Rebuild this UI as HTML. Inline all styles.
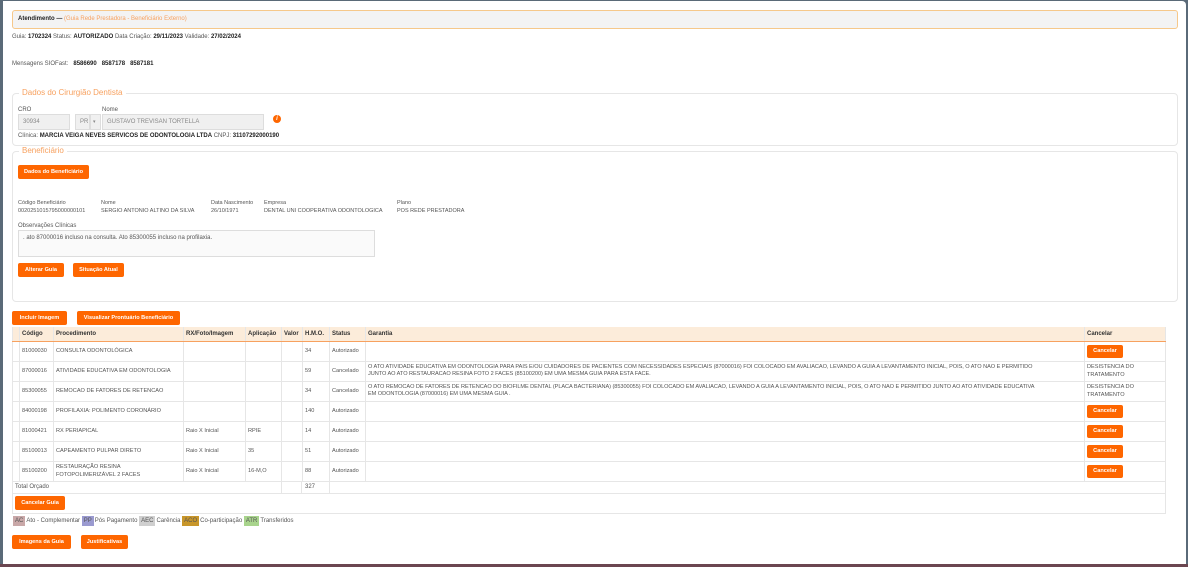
<!DOCTYPE html>
<html><head><meta charset="utf-8"><style>
*{box-sizing:border-box;margin:0;padding:0}
body{width:1188px;height:567px;background:#5a6a78;font-family:"Liberation Sans",sans-serif;font-size:6px;color:#555;position:relative;overflow:hidden}
.pg{position:absolute;left:3px;top:1px;width:1183px;height:563px;background:#fff;border-radius:0 4px 0 0}
.bot{position:absolute;left:0;top:564px;width:1188px;height:3px;background:#6b4650}
.a{position:absolute;white-space:nowrap}
.b{color:#222;font-weight:bold}
.btn{position:absolute;background:#fe6600;color:#fff;font-weight:bold;border-radius:2px;text-align:center;font-size:5.6px;line-height:14px;height:14px}
.fs{position:absolute;border:1px solid #e6e6e6;border-radius:4px}
.lg{position:absolute;background:#fff;color:#f7a15f;font-size:8px;padding:0 3px;line-height:10px}
.inp{position:absolute;background:#f0f0f0;border:1px solid #ddd;height:16px;line-height:14px;padding-left:4px;color:#888}
table{position:absolute;left:12px;top:327px;border-collapse:collapse;width:1154px;table-layout:fixed}
td,th{border:1px solid #e6e6e6;padding:0 2px;height:20px;vertical-align:middle;text-align:left;font-size:5.6px;overflow:hidden}
th{height:14px;background:#fcecda;color:#333;border-bottom:1.5px solid #f7a15f;border-top:none;font-size:6px}
td .btn{position:static;display:inline-block;width:36px;height:13px;line-height:13px}
.tag{display:inline-block;padding:0 2px;line-height:10px;height:10px;margin-right:1px}
</style></head><body>
<div class="pg"></div><div class="bot"></div>
<div class="a" style="left:12px;top:10px;width:1166px;height:19px;background:#f3f3f3;border:1px solid #f6c88a;border-radius:3px;padding:0 5px;line-height:17px"><span class="b">Atendimento —</span> <span style="color:#f7a15f">(Guia Rede Prestadora - Beneficiário Externo)</span></div>
<div class="a" style="left:12px;top:34px">Guia: <span class="b">1702324</span> Status: <span class="b">AUTORIZADO</span> Data Criação: <span class="b">29/11/2023</span> Validade: <span class="b">27/02/2024</span></div>
<div class="a" style="left:12px;top:61px">Mensagens SIOFast: &nbsp; <span class="b">8586690 &nbsp; 8587178 &nbsp; 8587181</span></div>

<div class="fs" style="left:12px;top:93px;width:1166px;height:53px"></div>
<div class="lg" style="left:19px;top:88px">Dados do Cirurgião Dentista</div>
<div class="a" style="left:18px;top:107px">CRO</div>
<div class="a" style="left:102px;top:107px">Nome</div>
<div class="inp" style="left:18px;top:114px;width:52px">30934</div>
<div class="inp" style="left:75px;top:114px;width:15px">PR</div>
<div class="inp" style="left:90px;top:114px;width:11px;font-size:5px;padding-left:2px">▾</div>
<div class="inp" style="left:102px;top:114px;width:162px">GUSTAVO TREVISAN TORTELLA</div>
<div class="a" style="left:273px;top:115px;width:8px;height:8px;border-radius:50%;background:#fe6600;color:#fff;font-size:6px;line-height:8px;text-align:center;font-weight:bold;font-style:italic">i</div>
<div class="a" style="left:18px;top:133px">Clínica: <span class="b">MARCIA VEIGA NEVES SERVICOS DE ODONTOLOGIA LTDA</span> CNPJ: <span class="b">31107292000190</span></div>

<div class="fs" style="left:12px;top:151px;width:1166px;height:151px"></div>
<div class="lg" style="left:19px;top:146px">Beneficiário</div>
<div class="btn" style="left:18px;top:165px;width:71px">Dados do Beneficiário</div>
<div class="a" style="left:18px;top:199px;line-height:8px;font-size:5.5px">Código Beneficiário<br>0020251015795000000101</div>
<div class="a" style="left:101px;top:199px;line-height:8px;font-size:5.5px">Nome<br>SERGIO ANTONIO ALTINO DA SILVA</div>
<div class="a" style="left:211px;top:199px;line-height:8px;font-size:5.5px">Data Nascimento<br>26/10/1971</div>
<div class="a" style="left:264px;top:199px;line-height:8px;font-size:5.5px">Empresa<br>DENTAL UNI COOPERATIVA ODONTOLOGICA</div>
<div class="a" style="left:397px;top:199px;line-height:8px;font-size:5.5px">Plano<br>POS REDE PRESTADORA</div>
<div class="a" style="left:18px;top:223px">Observações Clínicas</div>
<div class="a" style="left:18px;top:230px;width:357px;height:27px;border:1px solid #ddd;background:#fafafa;padding:4px">. ato 87000016 incluso na consulta. Ato 85300055 incluso na profilaxia.</div>
<div class="btn" style="left:18px;top:263px;width:46px">Alterar Guia</div>
<div class="btn" style="left:73px;top:263px;width:51px">Situação Atual</div>

<div class="btn" style="left:12px;top:311px;width:55px">Incluir Imagem</div>
<div class="btn" style="left:77px;top:311px;width:103px">Visualizar Prontuário Beneficiário</div>

<table>
<colgroup><col style="width:7px"><col style="width:34px"><col style="width:130px"><col style="width:62px"><col style="width:36px"><col style="width:21px"><col style="width:27px"><col style="width:36px"><col><col style="width:81px"></colgroup>
<tr><th></th><th>Código</th><th>Procedimento</th><th>RX/Foto/Imagem</th><th>Aplicação</th><th>Valor</th><th>H.M.O.</th><th>Status</th><th>Garantia</th><th>Cancelar</th></tr>
<tr><td></td><td>81000030</td><td>CONSULTA ODONTOLÓGICA</td><td></td><td></td><td></td><td>34</td><td>Autorizado</td><td></td><td><span class="btn">Cancelar</span></td></tr>
<tr><td></td><td>87000016</td><td>ATIVIDADE EDUCATIVA EM ODONTOLOGIA</td><td></td><td></td><td></td><td>59</td><td>Cancelado</td><td style="font-size:5.6px;line-height:7px;letter-spacing:-0.05px">O ATO ATIVIDADE EDUCATIVA EM ODONTOLOGIA PARA PAIS E/OU CUIDADORES DE PACIENTES COM NECESSIDADES ESPECIAIS (87000016) FOI COLOCADO EM AVALIACAO, LEVANDO A GUIA A LEVANTAMENTO INICIAL, POIS, O ATO NAO E PERMITIDO<br>JUNTO AO ATO RESTAURACAO RESINA FOTO 2 FACES (85100200) EM UMA MESMA GUIA PARA ESTA FACE.</td><td style="line-height:8px">DESISTENCIA DO TRATAMENTO</td></tr>
<tr><td></td><td>85300055</td><td>REMOCAO DE FATORES DE RETENCAO</td><td></td><td></td><td></td><td>34</td><td>Cancelado</td><td style="font-size:5.6px;line-height:7px;letter-spacing:-0.05px">O ATO REMOCAO DE FATORES DE RETENCAO DO BIOFILME DENTAL (PLACA BACTERIANA) (85300055) FOI COLOCADO EM AVALIACAO, LEVANDO A GUIA A LEVANTAMENTO INICIAL, POIS, O ATO NAO E PERMITIDO JUNTO AO ATO ATIVIDADE EDUCATIVA<br>EM ODONTOLOGIA (87000016) EM UMA MESMA GUIA .</td><td style="line-height:8px">DESISTENCIA DO TRATAMENTO</td></tr>
<tr><td></td><td>84000198</td><td>PROFILAXIA: POLIMENTO CORONÁRIO</td><td></td><td></td><td></td><td>140</td><td>Autorizado</td><td></td><td><span class="btn">Cancelar</span></td></tr>
<tr><td></td><td>81000421</td><td>RX PERIAPICAL</td><td>Raio X Inicial</td><td>RPIE</td><td></td><td>14</td><td>Autorizado</td><td></td><td><span class="btn">Cancelar</span></td></tr>
<tr><td></td><td>85100013</td><td>CAPEAMENTO PULPAR DIRETO</td><td>Raio X Inicial</td><td>35</td><td></td><td>51</td><td>Autorizado</td><td></td><td><span class="btn">Cancelar</span></td></tr>
<tr><td></td><td>85100200</td><td style="line-height:8px">RESTAURAÇÃO RESINA FOTOPOLIMERIZÁVEL 2 FACES</td><td>Raio X Inicial</td><td>16-M,O</td><td></td><td>88</td><td>Autorizado</td><td></td><td><span class="btn">Cancelar</span></td></tr>
</table>
<div class="a" style="left:12px;top:481px;width:1154px;height:13px;border:1px solid #e6e6e6;border-top:none"></div>
<div class="a" style="left:15px;top:484px">Total Orçado</div>
<div class="a" style="left:281px;top:481px;width:21px;height:13px;border-left:1px solid #e6e6e6;border-right:1px solid #e6e6e6"></div>
<div class="a" style="left:329px;top:481px;width:1px;height:13px;background:#e6e6e6"></div>
<div class="a" style="left:305px;top:484px">327</div>
<div class="a" style="left:12px;top:494px;width:1154px;height:20px;border:1px solid #e6e6e6;border-top:none"></div>
<div class="btn" style="left:15px;top:496px;width:50px">Cancelar Guia</div>
<div class="a" style="left:13px;top:516px;line-height:10px"><span class="tag" style="background:#c9a8a8">AC</span>Ato - Complementar <span class="tag" style="background:#9a9ad0">PP</span>Pós Pagamento <span class="tag" style="background:#cfcfcf">AEC</span>Carência <span class="tag" style="background:#c8962a">ACO</span>Co-participação <span class="tag" style="background:#a8d48c">ATR</span>Transferidos</div>
<div class="btn" style="left:12px;top:535px;width:59px">Imagens da Guia</div>
<div class="btn" style="left:81px;top:535px;width:47px">Justificativas</div>
</body></html>
